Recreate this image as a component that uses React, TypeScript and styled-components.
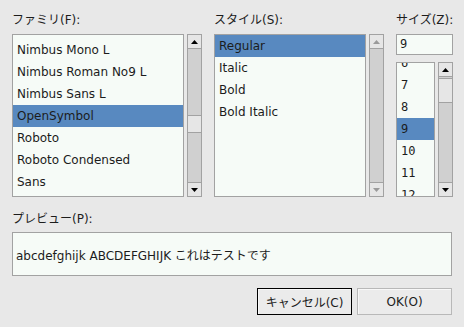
import React from 'react';
import styled, {createGlobalStyle} from 'styled-components';

const GlobalStyle = createGlobalStyle`
    html, body {
        margin: 0;
        padding: 0;
        background: #e8e8e8;
    }
    body {
        font-family: 'DejaVu Sans', 'Noto Sans CJK JP', sans-serif;
        font-size: 12px;
        color: #1c1c1c;
    }
`;

const Dialog = styled.div`
    width: 464px;
    height: 327px;
    box-sizing: border-box;
    padding: 12px 12px 0;
    display: flex;
    flex-direction: column;
`;

const TopRow = styled.div`
    display: grid;
    grid-template-columns: 190px 170px 1fr;
    column-gap: 12px;
`;

const Column = styled.div`
    display: flex;
    flex-direction: column;
`;

const Label = styled.div`
    height: 16px;
    line-height: 16px;
    margin-bottom: 6px;
    white-space: nowrap;
`;

const ListFrame = styled.div<{$height: number}>`
    display: flex;
    gap: 3px;
    height: ${(p) => p.$height}px;
`;

const List = styled.div<{$mono?: boolean; $offset?: number}>`
    flex: 1;
    min-width: 0;
    box-sizing: border-box;
    border: 1px solid #a2a2a2;
    background: #f6fbf7;
    overflow: hidden;
    padding-top: ${(p) => Math.max(p.$offset ?? 0, 0)}px;
    font-family: ${(p) => (p.$mono ? "'DejaVu Sans Mono', monospace" : 'inherit')};
`;

const Row = styled.div<{$selected?: boolean; $partial?: number}>`
    height: 22px;
    line-height: 22px;
    padding-left: 4px;
    white-space: nowrap;
    background: ${(p) => (p.$selected ? '#5889c0' : 'transparent')};
`;

const PartialRow = styled(Row)<{$visible: number; $fromTop?: boolean}>`
    height: ${(p) => p.$visible}px;
    overflow: hidden;
    line-height: ${(p) => (p.$fromTop ? 22 : 2 * p.$visible - 22)}px;
`;

const Scrollbar = styled.div`
    width: 15px;
    box-sizing: border-box;
    border: 1px solid #a2a2a2;
    display: flex;
    flex-direction: column;
    background: #e6e6e6;
`;

const ScrollButton = styled.div<{$disabled?: boolean}>`
    height: 13px;
    flex-shrink: 0;
    display: flex;
    align-items: center;
    justify-content: center;
    color: ${(p) => (p.$disabled ? '#9a9a9a' : '#000')};
`;

const Trough = styled.div`
    flex: 1;
    background: #d0d0d0;
    border-top: 1px solid #a2a2a2;
    border-bottom: 1px solid #a2a2a2;
    display: flex;
    flex-direction: column;
`;

const Thumb = styled.div`
    background: #e6e6e6;
    border-top: 1px solid #a2a2a2;
    border-bottom: 1px solid #a2a2a2;
    flex-shrink: 0;
`;

const SizeEntry = styled.div`
    height: 21px;
    box-sizing: border-box;
    border: 1px solid #a2a2a2;
    background: #f6fbf7;
    line-height: 19px;
    padding-left: 3px;
    margin-bottom: 7px;
    font-family: 'DejaVu Sans Mono', monospace;
`;

const PreviewLabel = styled(Label)`
    margin-top: 14px;
    margin-bottom: 5px;
`;

const PreviewBox = styled.div`
    height: 44px;
    box-sizing: border-box;
    border: 1px solid #a2a2a2;
    background: #f6fbf7;
    display: flex;
    align-items: center;
    padding-left: 3px;
    white-space: nowrap;
`;

const ButtonRow = styled.div`
    display: flex;
    justify-content: flex-end;
    gap: 5px;
    margin-top: 12px;
`;

const Button = styled.button<{$focused?: boolean}>`
    width: 95px;
    height: 27px;
    box-sizing: border-box;
    font: inherit;
    color: #1c1c1c;
    background: #ebebeb;
    border: 1px solid ${(p) => (p.$focused ? '#000' : '#b8b8b8')};
    box-shadow: inset 1px 1px 0 #f8f8f8;
    padding: 0;
`;

function Arrow({down}: {down?: boolean}) {
    return (
        <svg width="7" height="4" viewBox="0 0 7 4">
            <polygon points={down ? '0,0 7,0 3.5,4' : '0,4 7,4 3.5,0'} fill="currentColor" />
        </svg>
    );
}

type BarProps = {thumbTop?: number; thumbHeight?: number; disabled?: boolean};

function ScrollBar({thumbTop, thumbHeight, disabled}: BarProps) {
    return (
        <Scrollbar>
            <ScrollButton $disabled={disabled}>
                <Arrow />
            </ScrollButton>
            <Trough>
                {thumbHeight ? <Thumb style={{marginTop: thumbTop, height: thumbHeight}} /> : null}
            </Trough>
            <ScrollButton $disabled={disabled}>
                <Arrow down />
            </ScrollButton>
        </Scrollbar>
    );
}

const families = ['Nimbus Mono L', 'Nimbus Roman No9 L', 'Nimbus Sans L', 'OpenSymbol', 'Roboto', 'Roboto Condensed', 'Sans'];
const styles = ['Regular', 'Italic', 'Bold', 'Bold Italic'];
const sizes = ['7', '8', '9', '10', '11'];

export default function App(): JSX.Element {
    return (
        <>
            <GlobalStyle />
            <Dialog>
                <TopRow>
                    <Column>
                        <Label>ファミリ(F):</Label>
                        <ListFrame $height={163}>
                            <List $offset={4}>
                                {families.map((f) => (
                                    <Row key={f} $selected={f === 'OpenSymbol'}>
                                        {f}
                                    </Row>
                                ))}
                            </List>
                            <ScrollBar thumbTop={66} thumbHeight={16} />
                        </ListFrame>
                    </Column>
                    <Column>
                        <Label>スタイル(S):</Label>
                        <ListFrame $height={163}>
                            <List>
                                {styles.map((s) => (
                                    <Row key={s} $selected={s === 'Regular'}>
                                        {s}
                                    </Row>
                                ))}
                            </List>
                            <ScrollBar disabled />
                        </ListFrame>
                    </Column>
                    <Column>
                        <Label>サイズ(Z):</Label>
                        <SizeEntry>9</SizeEntry>
                        <ListFrame $height={135}>
                            <List $mono>
                                <PartialRow $visible={11}>6</PartialRow>
                                {sizes.map((s) => (
                                    <Row key={s} $selected={s === '9'}>
                                        {s}
                                    </Row>
                                ))}
                                <PartialRow $visible={12} $fromTop>
                                    12
                                </PartialRow>
                            </List>
                            <ScrollBar thumbTop={1} thumbHeight={23} />
                        </ListFrame>
                    </Column>
                </TopRow>
                <PreviewLabel>プレビュー(P):</PreviewLabel>
                <PreviewBox>abcdefghijk ABCDEFGHIJK これはテストです</PreviewBox>
                <ButtonRow>
                    <Button $focused>キャンセル(C)</Button>
                    <Button>OK(O)</Button>
                </ButtonRow>
            </Dialog>
        </>
    );
}
